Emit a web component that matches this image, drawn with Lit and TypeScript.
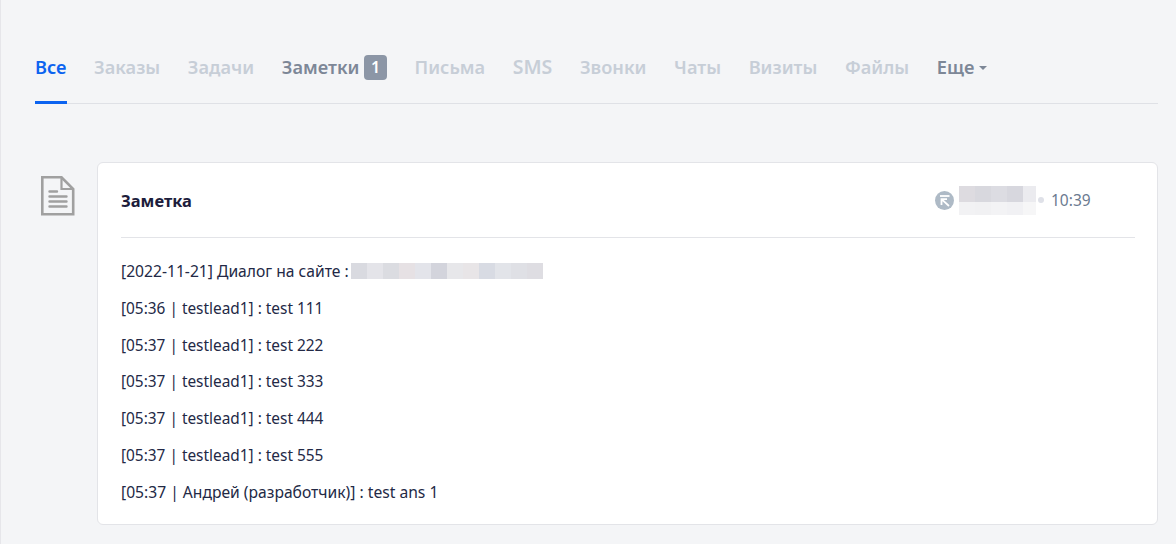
import { LitElement, html, css } from "lit";
import { customElement } from "lit/decorators.js";

const TABS: [string, string][] = [
  ["Все", "active"], ["Заказы", ""], ["Задачи", ""], ["Заметки", "dark"], ["Письма", ""],
  ["SMS", "latin"], ["Звонки", ""], ["Чаты", ""], ["Визиты", ""], ["Файлы", ""], ["Еще", "dark more"],
];
const LINES = [
  "[05:36 | testlead1] : test 111",
  "[05:37 | testlead1] : test 222",
  "[05:37 | testlead1] : test 333",
  "[05:37 | testlead1] : test 444",
  "[05:37 | testlead1] : test 555",
  "[05:37 | Андрей (разработчик)] : test ans 1",
];
const BLUR_NAME = ["#dddbe0", "#d8d8de", "#dcdce2", "#d7d7de", "#ebebef"];
const BLUR_NAME2 = ["#f2f2f4", "#f1f1f3", "#f3f3f5", "#f1f1f4", "#f6f6f7"];
const BLUR_SITE = ["#d9dae0", "#e4e4e9", "#dbdce1", "#e6e1e4", "#e3e4ea", "#d3d4dc", "#e7e7ea", "#e8e5e7", "#d8dbe3", "#e2e4e9", "#dfe0e5", "#dedde2"];

@customElement("app-root")
export class AppRoot extends LitElement {
  static styles = css`
    :host { display: block; width: 1176px; height: 544px; overflow: hidden; background: #f4f5f7; box-sizing: border-box; border-left: 1px solid #e6e6ea; font-family: "Noto Sans", sans-serif; color: #232946; }
    .page { padding: 0 18px 0 34px; display: flex; flex-direction: column; }
    .tabs { display: flex; height: 104px; gap: 27.6px; border-bottom: 1px solid #dfe1e6; box-sizing: border-box; margin: 0; }
    .tab { height: 104px; box-sizing: border-box; padding-top: 53px; line-height: 28px; font-size: 18.2px; font-weight: 600; color: #c7ced7; display: flex; align-items: flex-start; white-space: nowrap; }
    .tab.latin { font-size: 19.5px; }
    .tab.active { color: #0b63f0; border-bottom: 3px solid #0b63f0; height: 104px; }
    .tab.dark { color: #7d8797; }
    .badge { margin: 2px 0 0 4.5px; width: 23px; height: 25px; border-radius: 4px; background: #8c96a6; color: #fff; font-size: 16px; line-height: 25px; text-align: center; }
    .caret { width: 0; height: 0; border-left: 4px solid transparent; border-right: 4px solid transparent; border-top: 4px solid #7d8797; margin: 13px 0 0 5px; }
    .row { display: flex; margin-top: 58px; }
    .icon { width: 62px; flex: none; padding: 14px 0 0 6px; box-sizing: border-box; }
    .icon svg { display: block; }
    .card { flex: 1; height: 363px; box-sizing: border-box; background: #fff; border: 1px solid #e3e4e8; border-radius: 6px; padding: 0 22px 0 23px; }
    .head { height: 75px; box-sizing: border-box; display: flex; align-items: center; border-bottom: 1px solid #e3e4e8; }
    .title { font-size: 16.5px; font-weight: 700; color: #1d1d3c; flex: 1; }
    .meta { display: flex; align-items: center; width: 200px; font-size: 15.5px; color: #6b7a90; }
    .meta svg { margin-right: 5px; }
    .dot { width: 6px; height: 6px; border-radius: 50%; background: #dfe1e8; margin: 0 7px 0 2px; }
    .blurname { display: grid; grid-template-columns: repeat(5, 16px); grid-auto-rows: 16px 13px; width: 77px; height: 29px; overflow: hidden; }
    .body { padding-top: 22px; font-size: 15.65px; font-family: "Noto Sans", sans-serif; }
    p { margin: 0 0 14.67px; line-height: 22px; white-space: nowrap; display: flex; }
    .first { margin-bottom: 15.9px; }
    .blursite { display: flex; margin-left: 2px; height: 22px; }
    .blursite span { width: 16px; height: 16px; margin-top: 3px; }
    .latin-line { font-size: 15.4px; }
  `;

  render() {
    return html`<div class="page">
      <div class="tabs">
        ${TABS.map(([t, c]) => html`<div class="tab ${c}">${t}
          ${t === "Заметки" ? html`<span class="badge">1</span>` : ""}
          ${t === "Еще" ? html`<span class="caret"></span>` : ""}</div>`)}
      </div>
      <div class="row">
        <div class="icon">
          <svg width="34" height="40" viewBox="0 0 34 40" fill="none" stroke="#a0a0a0" stroke-width="2.6">
            <path d="M1.3 1.3H20.5L32.2 13V38.2H1.3Z"/>
            <path d="M20.5 1.3V13H32.2" stroke-width="2.2"/>
            <path d="M8.5 15.5H16M8.5 20.5H25.5M8.5 25.5H25.5M8.5 30.5H25.5" stroke-width="2.4" stroke-linecap="round"/>
          </svg>
        </div>
        <div class="card">
          <div class="head">
            <div class="title">Заметка</div>
            <div class="meta">
              <svg width="19" height="19" viewBox="0 0 19 19" fill="none" stroke="#fff" stroke-width="1.8">
                <circle cx="9.5" cy="9.5" r="9.5" fill="#aebac6" stroke="none"/>
                <path d="M5 5H14.5"/>
                <path d="M6.5 8.2H12M6.5 7.3V14M6.5 8.2L14 15"/>
              </svg>
              <div class="blurname">
                ${BLUR_NAME.map((b) => html`<span style="background:${b}"></span>`)}
                ${BLUR_NAME2.map((b) => html`<span style="background:${b}"></span>`)}
              </div>
              <span class="dot"></span>
              <span>10:39</span>
            </div>
          </div>
          <div class="body">
            <p class="first">[2022-11-21] Диалог на сайте :<span class="blursite">${BLUR_SITE.map((b) => html`<span style="background:${b}"></span>`)}</span></p>
            ${LINES.map((l, i) => html`<p class="${i < 5 ? "latin-line" : ""}">${l}</p>`)}
          </div>
        </div>
      </div>
    </div>`;
  }
}
